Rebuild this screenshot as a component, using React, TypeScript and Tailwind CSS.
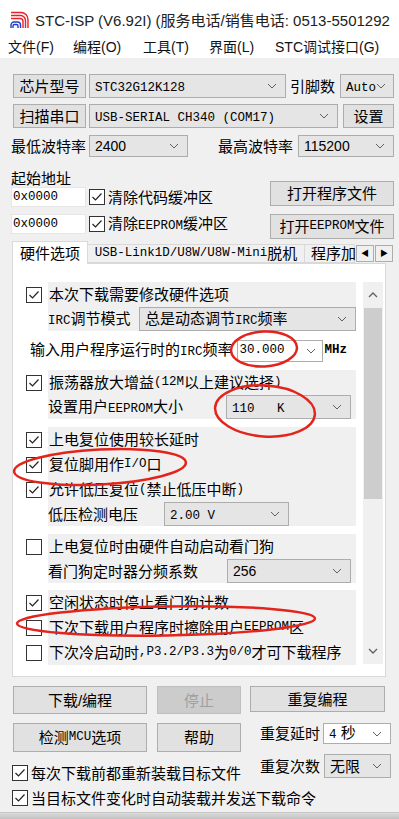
import React from "react";

type Kids = { children?: React.ReactNode };

// SimSun-like half-width latin runs
const M = ({ children }: Kids) => (
  <span className="font-['Liberation_Mono',monospace] text-[12.5px]">{children}</span>
);

const Chevron = () => (
  <svg width="10" height="6" viewBox="0 0 10 6" className="shrink-0">
    <path d="M1 1 L5 5 L9 1" fill="none" stroke="#606060" strokeWidth="1" />
  </svg>
);

const Box = ({ on }: { on?: boolean }) => (
  <span className="flex h-[16px] w-[16px] shrink-0 items-center justify-center border border-[#333] bg-white">
    {on && (
      <svg width="12" height="12" viewBox="0 0 12 12">
        <path d="M1.5 6 L4.5 9 L10.5 2.5" fill="none" stroke="#222" strokeWidth="1.2" />
      </svg>
    )}
  </span>
);

const Sel = ({ className, children, white }: Kids & { className: string; white?: boolean }) => (
  <div
    className={`flex items-center justify-between border border-[#adadad] pl-[5px] pr-[8px] ${
      white ? "bg-white" : "bg-[#e5e5e5]"
    } ${className}`}
  >
    <span className="whitespace-pre">{children}</span>
    <Chevron />
  </div>
);

const Btn = ({ className, children, disabled }: Kids & { className: string; disabled?: boolean }) => (
  <button
    className={`flex shrink-0 items-center justify-center border ${
      disabled ? "border-[#bfbfbf] bg-[#cccccc] text-[#a0a0a0]" : "border-[#adadad] bg-[#e1e1e1]"
    } ${className}`}
  >
    {children}
  </button>
);

const CheckRow = ({ on, children }: Kids & { on?: boolean }) => (
  <div className="flex h-[25px]">
    <div className="flex w-[35px] items-center pl-[13px]">
      <Box on={on} />
    </div>
    <div className="flex w-[308px] items-center whitespace-nowrap bg-[#f0f0f0] pl-[1px]">{children}</div>
  </div>
);

const SelRow = ({ labelClass, children, label }: Kids & { labelClass: string; label: React.ReactNode }) => (
  <div className="flex h-[24px]">
    <div className="w-[35px]" />
    <div className="flex w-[308px] items-center bg-[#f0f0f0]">
      <span className={`whitespace-nowrap ${labelClass}`}>{label}</span>
      {children}
    </div>
  </div>
);

const Logo = () => (
  <svg width="19" height="18" viewBox="0 0 19 18">
    <g fill="none" stroke="#e8202a" strokeWidth="1.4">
      <path d="M1 1.5 H11 A7 7 0 0 1 18 8.5 V17" />
      <path d="M1 4.5 H10.5 A5 5 0 0 1 15.5 9.5 V17" />
      <path d="M1 7.5 H10 A3 3 0 0 1 13 10.5 V17" />
    </g>
    <g fill="none" stroke="#1f3fc8" strokeWidth="1.4">
      <path d="M10.5 17 V14 A3 3 0 0 0 7.5 11 H4 A3 3 0 0 0 1 14 V17" />
      <path d="M8 17 V15 A1.5 1.5 0 0 0 6.5 13.5 H4.5 A1.5 1.5 0 0 0 3 15 V17" />
    </g>
  </svg>
);

export default function App() {
  return (
    <div className="relative flex h-[819px] w-[399px] flex-col overflow-hidden bg-[#f0f0f0] font-['Liberation_Sans','Noto_Sans_CJK_SC',sans-serif] text-[15px] leading-none text-black">
      {/* title bar */}
      <div className="flex h-[40px] shrink-0 items-center overflow-hidden bg-white pl-[10px]">
        <Logo />
        <span className="ml-[6px] whitespace-nowrap text-[15px] text-[#222]">
          STC-ISP (V6.92I) (服务电话/销售电话: 0513-5501292
        </span>
      </div>

      {/* menu */}
      <div className="flex h-[18px] shrink-0 items-start bg-white pl-[8px] text-[14px] text-[#111]">
        <span className="w-[65px]">文件(F)</span>
        <span className="w-[70px]">编程(O)</span>
        <span className="w-[66px]">工具(T)</span>
        <span className="w-[66px]">界面(L)</span>
        <span className="whitespace-nowrap">STC调试接口(G)</span>
      </div>

      <div className="flex flex-1 flex-col pl-[13px] pr-[5px]">
        {/* chip */}
        <div className="mt-[16px] flex h-[24px] items-center">
          <Btn className="h-[24px] w-[73px]">芯片型号</Btn>
          <Sel className="ml-[3px] h-[24px] w-[197px]">
            <M>STC32G12K128</M>
          </Sel>
          <span className="ml-[4px]">引脚数</span>
          <Sel className="ml-auto h-[24px] w-[54px] pr-[5px]">
            <M>Auto</M>
          </Sel>
        </div>

        {/* port */}
        <div className="mt-[6px] flex h-[24px] items-center">
          <Btn className="h-[24px] w-[73px]">扫描串口</Btn>
          <Sel className="ml-[3px] h-[24px] w-[249px]">
            <M>USB-SERIAL CH340 (COM17)</M>
          </Sel>
          <Btn className="ml-auto h-[24px] w-[51px]">设置</Btn>
        </div>

        {/* baud */}
        <div className="mt-[7px] flex h-[22px] items-center">
          <span className="-ml-[2px] w-[78px]">最低波特率</span>
          <Sel className="h-[22px] w-[99px] text-[14px]">2400</Sel>
          <span className="ml-[30px]">最高波特率</span>
          <Sel className="ml-auto h-[22px] w-[96px] text-[14px]">115200</Sel>
        </div>

        {/* start address */}
        <div className="mt-[14px] flex">
          <div className="-ml-[2px] flex flex-col">
            <span className="h-[16px]">起始地址</span>
            <div className="flex h-[20px] items-center">
              <div className="flex h-[20px] w-[75px] items-center border border-[#e6e6e6] bg-white pl-[1px]">
                <M>0x0000</M>
              </div>
              <span className="ml-[3px]">
                <Box on />
              </span>
              <span className="ml-[3px]">清除代码缓冲区</span>
            </div>
            <div className="mt-[7px] flex h-[20px] items-center">
              <div className="flex h-[20px] w-[75px] items-center border border-[#e6e6e6] bg-white pl-[1px]">
                <M>0x0000</M>
              </div>
              <span className="ml-[3px]">
                <Box on />
              </span>
              <span className="ml-[3px] whitespace-nowrap">
                清除<M>EEPROM</M>缓冲区
              </span>
            </div>
          </div>
          <div className="ml-auto flex flex-col pt-[10px]">
            <Btn className="h-[25px] w-[124px]">打开程序文件</Btn>
            <Btn className="mt-[8px] h-[25px] w-[124px]">
              打开<M>EEPROM</M>文件
            </Btn>
          </div>
        </div>

        {/* tabs */}
        <div className="mt-[2px] flex h-[22px] items-end">
          <div className="relative z-10 -mb-px -ml-[1px] flex h-[23px] w-[76px] items-center justify-center border border-b-0 border-[#d9d9d9] bg-white">
            硬件选项
          </div>
          <div className="flex h-[19px] w-[217px] items-center justify-center whitespace-nowrap border border-l-0 border-[#d9d9d9] bg-[#f0f0f0]">
            <M>USB-Link1D/U8W/U8W-Mini</M>脱机
          </div>
          <div className="flex h-[19px] w-[50px] items-center whitespace-nowrap border border-l-0 border-[#d9d9d9] bg-[#f0f0f0] pl-[6px]">
            程序加
          </div>
          <div className="mb-[1px] ml-[1px] flex h-[17px] w-[18px] items-center justify-center border border-[#adadad] bg-[#f0f0f0] text-[8px]">
            ◀
          </div>
          <div className="mb-[1px] ml-[1px] flex h-[17px] w-[18px] items-center justify-center border border-[#adadad] bg-[#f0f0f0] text-[8px]">
            ▶
          </div>
        </div>

        {/* panel */}
        <div className="-ml-[1px] flex h-[414px] w-[374px] border border-[#d9d9d9] bg-white">
          <div className="flex flex-col pt-[18px]">
            <CheckRow on>本次下载需要修改硬件选项</CheckRow>
            <SelRow labelClass="w-[91px]" label={<><M>IRC</M>调节模式</>}>
              <Sel className="h-[24px] w-[217px]">总是动态调节<M>IRC</M>频率</Sel>
            </SelRow>
            <div className="flex h-[39px] items-center pl-[17px]">
              <span className="whitespace-nowrap">
                输入用户程序运行时的<M>IRC</M>频率
              </span>
              <div className="ml-[4px] flex h-[22px] w-[86px] items-center justify-between border border-[#adadad] bg-white pl-[2px] pr-[6px]">
                <M>30.000</M>
                <Chevron />
              </div>
              <span className="ml-[2px] text-[11px] font-bold">
                <M>MHz</M>
              </span>
            </div>
            <CheckRow on>
              振荡器放大增益<M>(12M</M>以上建议选择<M>)</M>
            </CheckRow>
            <SelRow labelClass="w-[178px]" label={<>设置用户<M>EEPROM</M>大小</>}>
              <Sel className="h-[24px] w-[125px]">
                <M>110   K</M>
              </Sel>
            </SelRow>
            <div className="h-[8px]" />
            <CheckRow on>上电复位使用较长延时</CheckRow>
            <CheckRow on>
              复位脚用作<M>I/O</M>口
            </CheckRow>
            <CheckRow on>
              允许低压复位<M>(</M>禁止低压中断<M>)</M>
            </CheckRow>
            <SelRow labelClass="w-[116px]" label="低压检测电压">
              <Sel className="h-[24px] w-[125px]">
                <M>2.00 V</M>
              </Sel>
            </SelRow>
            <div className="h-[8px]" />
            <CheckRow>上电复位时由硬件自动启动看门狗</CheckRow>
            <SelRow labelClass="w-[179px]" label="看门狗定时器分频系数">
              <Sel className="h-[24px] w-[124px] text-[14px]">256</Sel>
            </SelRow>
            <div className="h-[7px]" />
            <CheckRow on>空闲状态时停止看门狗计数</CheckRow>
            <CheckRow>
              下次下载用户程序时擦除用户<M>EEPROM</M>区
            </CheckRow>
            <CheckRow>
              下次冷启动时<M>,P3.2/P3.3</M>为<M>0/0</M>才可下载程序
            </CheckRow>
          </div>

          {/* scrollbar */}
          <div className="ml-[7px] mt-[18px] flex h-[382px] w-[20px] flex-col bg-[#f0f0f0]">
            <div className="flex h-[26px] items-center justify-center">
              <svg width="10" height="6" viewBox="0 0 10 6">
                <path d="M1 5 L5 1 L9 5" fill="none" stroke="#606060" strokeWidth="1.3" />
              </svg>
            </div>
            <div className="mx-[1px] h-[191px] bg-[#cdcdcd]" />
            <div className="flex-1" />
            <div className="flex h-[26px] items-center justify-center">
              <svg width="10" height="6" viewBox="0 0 10 6">
                <path d="M1 1 L5 5 L9 1" fill="none" stroke="#606060" strokeWidth="1.3" />
              </svg>
            </div>
          </div>
        </div>

        {/* bottom buttons */}
        <div className="mt-[9px] flex items-start">
          <Btn className="h-[28px] w-[134px]">下载/编程</Btn>
          <Btn disabled className="ml-[10px] h-[28px] w-[84px]">
            停止
          </Btn>
          <Btn className="ml-[9px] h-[26px] w-[135px]">重复编程</Btn>
        </div>

        <div className="mt-[9px] flex">
          <div className="flex w-[247px] flex-col">
            <div className="flex h-[29px]">
              <Btn className="h-[29px] w-[134px]">
                检测<M>MCU</M>选项
              </Btn>
              <Btn className="ml-[10px] h-[29px] w-[84px]">帮助</Btn>
            </div>
            <div className="-ml-[1px] mt-[11px] flex h-[20px] items-center">
              <Box on />
              <span className="ml-[3px] whitespace-nowrap">每次下载前都重新装载目标文件</span>
            </div>
          </div>
          <div className="flex flex-col">
            <div className="flex h-[21px] items-center">
              <span>重复延时</span>
              <Sel white className="ml-[3px] h-[21px] w-[68px] pl-[2px]">
                <M>4</M> 秒
              </Sel>
            </div>
            <div className="mt-[10px] flex h-[24px] items-center">
              <span>重复次数</span>
              <Sel className="ml-[4px] h-[24px] w-[67px] pl-[2px]">无限</Sel>
            </div>
          </div>
        </div>

        <div className="-ml-[1px] mt-[5px] flex h-[20px] items-center">
          <Box on />
          <span className="ml-[3px] whitespace-nowrap">当目标文件变化时自动装载并发送下载命令</span>
        </div>

        <div className="-ml-[13px] -mr-[5px] mt-auto h-[7px] border-t border-[#c8c8c8] bg-linear-to-b from-[#dadada] to-[#c2c2c2]" />
      </div>

      {/* red hand-drawn annotations */}
      <svg className="pointer-events-none absolute left-0 top-0" width="399" height="819" viewBox="0 0 399 819">
        <g fill="none" stroke="#e3241c" strokeWidth="2.5">
          <ellipse cx="264" cy="349" rx="33" ry="17.5" transform="rotate(-3 264 349)" />
          <ellipse cx="265" cy="411" rx="50" ry="25.5" transform="rotate(4 265 411)" />
          <ellipse cx="100" cy="467" rx="86" ry="17.5" transform="rotate(-3 100 467)" />
          <ellipse cx="166" cy="621" rx="149" ry="14.5" transform="rotate(-1 166 621)" />
        </g>
      </svg>
    </div>
  );
}
